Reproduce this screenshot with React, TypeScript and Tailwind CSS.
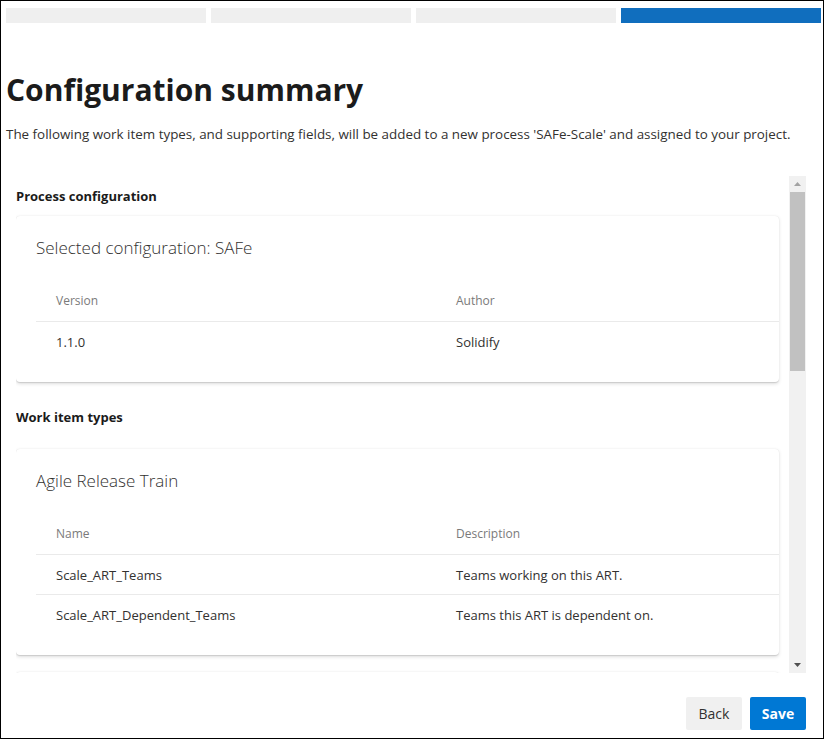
import React from 'react';

const font = "font-['Open_Sans','Noto_Sans',sans-serif]";

const steps = [false, false, false, true];

const Card = ({
  title,
  cols,
  rows,
}: {
  title: string;
  cols: [string, string];
  rows: [string, string][];
}) => (
  <div className="bg-white rounded-[4px] shadow-[0_1.6px_3.6px_rgba(0,0,0,0.13),0_0.3px_0.9px_rgba(0,0,0,0.11)] pt-[20px] pb-[20px] pl-[20px]">
    <div className="text-[17px] leading-[24px] text-[#323130] font-light">{title}</div>
    <div className="mt-[18px]">
      <div className="flex h-[44px] items-center border-b border-[#eaeaea] text-[12px] text-[#7a7a7a] pt-[2px]">
        <div className="w-[400px] pl-[20px]">{cols[0]}</div>
        <div className="pl-[20px]">{cols[1]}</div>
      </div>
      {rows.map((r, i) => (
        <div
          key={i}
          className={`flex h-[40px] items-center text-[13px] text-[#323130] pt-[2px] ${
            i < rows.length - 1 ? 'border-b border-[#eaeaea]' : ''
          }`}
        >
          <div className="w-[400px] pl-[20px]">{r[0]}</div>
          <div className="pl-[20px]">{r[1]}</div>
        </div>
      ))}
    </div>
  </div>
);

const App = () => {
  return (
    <div className={`w-[824px] h-[739px] border border-black bg-white flex flex-col ${font}`}>
      {/* wizard progress */}
      <div className="flex gap-[5px] pl-[5px] pr-[2px] pt-[7px]">
        {steps.map((done, i) => (
          <div key={i} className={`h-[15px] flex-1 ${done ? 'bg-[#106ebe]' : 'bg-[#efefef]'}`} />
        ))}
      </div>

      <div className="pl-[5px] mt-[47px]">
        <h1 className="text-[30px] leading-[40px] font-bold text-[#1b1b1b]">Configuration summary</h1>
        <p className="mt-[14px] text-[13.4px] leading-[20px] text-[#323130] whitespace-nowrap">
          The following work item types, and supporting fields, will be added to a new process 'SAFe-Scale' and
          assigned to your project.
        </p>
      </div>

      {/* scrollable content */}
      <div className="flex mt-[32px] pl-[15px] pr-[17px] h-[497px]">
        <div className="flex-1 overflow-hidden pr-[10px]">
          <div className="text-[13px] leading-[20px] font-bold text-[#1b1b1b] mt-[10px]">Process configuration</div>
          <div className="mt-[10px]">
            <Card title="Selected configuration: SAFe" cols={['Version', 'Author']} rows={[['1.1.0', 'Solidify']]} />
          </div>
          <div className="text-[13px] leading-[20px] font-bold text-[#1b1b1b] mt-[25px]">Work item types</div>
          <div className="mt-[22px] flex flex-col gap-[17px] pb-[4px]">
            <Card
              title="Agile Release Train"
              cols={['Name', 'Description']}
              rows={[
                ['Scale_ART_Teams', 'Teams working on this ART.'],
                ['Scale_ART_Dependent_Teams', 'Teams this ART is dependent on.'],
              ]}
            />
            <div className="h-[20px] bg-white rounded-t-[4px] shadow-[0_1.6px_3.6px_rgba(0,0,0,0.13),0_0.3px_0.9px_rgba(0,0,0,0.11)]" />
          </div>
        </div>
        {/* scrollbar */}
        <div className="w-[17px] bg-[#f1f1f1] flex flex-col items-center">
          <div className="h-[16px] flex items-center justify-center">
            <svg width="7" height="4" viewBox="0 0 7 4">
              <path d="M0 4 L3.5 0 L7 4 Z" fill="#a3a3a3" />
            </svg>
          </div>
          <div className="w-[15px] h-[179px] bg-[#c1c1c1]" />
          <div className="flex-1" />
          <div className="h-[16px] flex items-center justify-center">
            <svg width="7" height="4" viewBox="0 0 7 4">
              <path d="M0 0 L7 0 L3.5 4 Z" fill="#505050" />
            </svg>
          </div>
        </div>
      </div>

      <div className="flex justify-end gap-[8px] pr-[17px] mt-[24px]">
        <button className="w-[56px] h-[33px] rounded-[2px] bg-[#f0f0f0] text-[14px] text-[#323130]">Back</button>
        <button className="w-[56px] h-[33px] rounded-[2px] bg-[#0078d4] text-[14px] font-bold text-white">Save</button>
      </div>
    </div>
  );
};

export default App;
